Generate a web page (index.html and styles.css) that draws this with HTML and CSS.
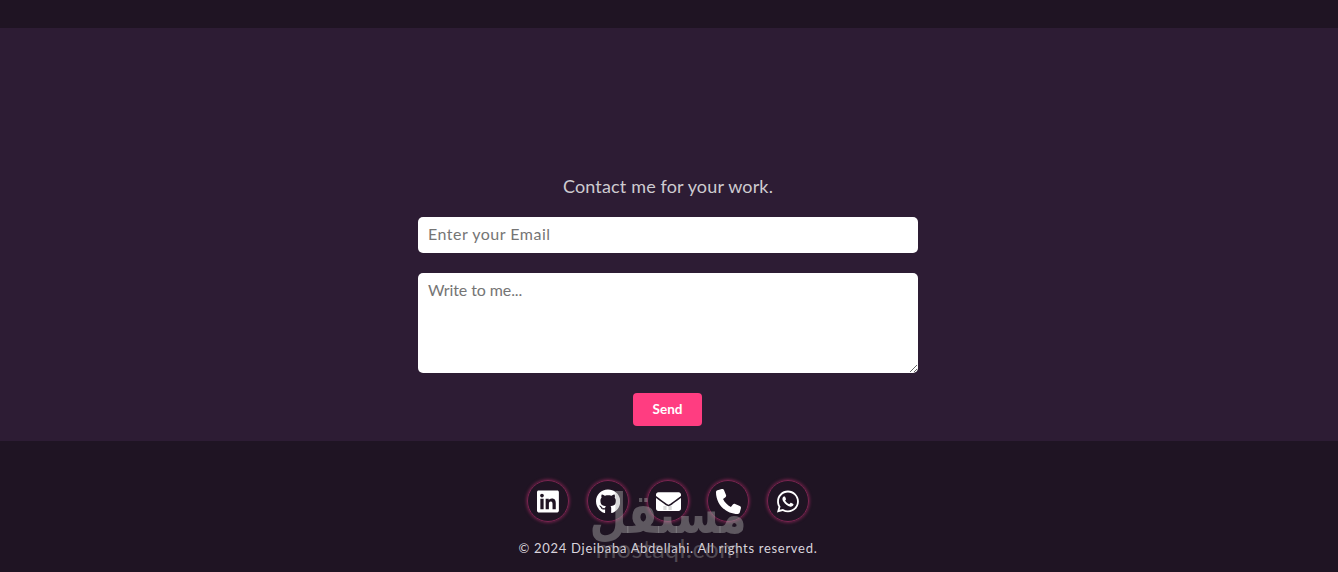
FILE: index.html
```html
<!DOCTYPE html>
<html lang="en">

<head>
  <meta charset="UTF-8">
  <meta name="viewport" content="width=device-width, initial-scale=1.0">
  <title>Contact</title>
  <link rel="stylesheet" href="styles.css">
</head>

<body>

  <!-- Top bar -->
  <header class="top-bar"></header>

  <!-- Contact form -->
  <section class="contact">
    <h2 class="contact-title">Contact me for your work.</h2>
    <form class="contact-form" onsubmit="return false;">
      <input type="email" class="field" placeholder="Enter your Email">
      <textarea class="field field-area" placeholder="Write to me..."></textarea>
      <button type="submit" class="send-btn">Send</button>
    </form>
  </section>

  <!-- Footer -->
  <footer class="footer">
    <div class="socials">
      <a href="#" class="social" aria-label="LinkedIn">
        <svg class="icon" viewBox="0 0 448 512"><path d="M416 32H31.9C14.3 32 0 46.5 0 64.3v383.4C0 465.5 14.3 480 31.9 480H416c17.6 0 32-14.5 32-32.3V64.3c0-17.8-14.4-32.3-32-32.3zM135.4 416H69V202.2h66.5V416zm-33.2-243c-21.3 0-38.5-17.3-38.5-38.5S80.9 96 102.2 96c21.2 0 38.5 17.3 38.5 38.5 0 21.3-17.2 38.5-38.5 38.5zm282.1 243h-66.4V312c0-24.8-.5-56.7-34.5-56.7-34.6 0-39.9 27-39.9 54.9V416h-66.4V202.2h63.7v29.2h.9c8.9-16.8 30.6-34.5 62.9-34.5 67.2 0 79.7 44.3 79.7 101.9V416z"/></svg>
      </a>
      <a href="#" class="social" aria-label="GitHub">
        <svg class="icon" viewBox="0 0 496 512"><path d="M165.9 397.4c0 2-2.3 3.6-5.2 3.6-3.3 0-5.6-1.6-5.6-3.6 0-2 2.3-3.6 5.2-3.6 3-.3 5.6 1.3 5.6 3.6zm-31.1-4.5c-.7 2 1.3 4.3 4.3 4.9 2.6 1 5.6 0 6.2-2s-1.3-4.3-4.3-5.2c-2.6-.7-5.5.3-6.2 2.3zm44.2-1.7c-2.9.7-4.9 2.6-4.6 4.9.3 2 2.9 3.3 5.9 2.6 2.9-.7 4.9-2.6 4.6-4.6-.3-1.9-3-3.2-5.9-2.9zM244.8 8C106.1 8 0 113.3 0 252c0 110.9 69.8 205.8 169.5 239.2 12.8 2.3 17.3-5.6 17.3-12.1 0-6.2-.3-40.4-.3-61.4 0 0-70 15-84.7-29.8 0 0-11.4-29.1-27.8-36.6 0 0-22.9-15.7 1.6-15.4 0 0 24.9 2 38.6 25.8 21.9 38.6 58.6 27.5 72.9 20.9 2.3-16 8.8-27.1 16-33.7-55.9-6.2-112.3-14.3-112.3-110.5 0-27.5 7.6-41.3 23.6-58.9-2.6-6.5-11.1-33.3 2.6-67.9 20.9-6.5 69 27 69 27 20-5.6 41.5-8.5 62.8-8.5s42.8 2.9 62.8 8.5c0 0 48.1-33.6 69-27 13.7 34.7 5.2 61.4 2.6 67.9 16 17.7 25.8 31.5 25.8 58.9 0 96.5-58.9 104.2-114.8 110.5 9.2 7.9 17 22.9 17 46.4 0 33.7-.3 75.4-.3 83.6 0 6.5 4.6 14.4 17.3 12.1C428.2 457.8 496 362.9 496 252 496 113.3 383.5 8 244.8 8z"/></svg>
      </a>
      <a href="#" class="social" aria-label="Email">
        <svg class="icon" viewBox="0 0 512 512"><path d="M502.3 190.8c3.9-3.1 9.7-.2 9.7 4.7V400c0 26.5-21.5 48-48 48H48c-26.5 0-48-21.5-48-48V195.6c0-5 5.7-7.8 9.7-4.7 22.4 17.4 52.1 39.5 154.1 113.6 21.1 15.4 56.7 47.8 92.2 47.6 35.7.3 72-32.8 92.3-47.6 102-74.1 131.6-96.3 154-113.7zM256 320c23.2.4 56.6-29.2 73.4-41.4 132.7-96.3 142.8-104.7 173.4-128.7 5.8-4.5 9.2-11.5 9.2-18.9v-19c0-26.5-21.5-48-48-48H48C21.5 64 0 85.5 0 112v19c0 7.4 3.4 14.3 9.2 18.9 30.6 23.9 40.7 32.4 173.4 128.7 16.8 12.2 50.2 41.8 73.4 41.4z"/></svg>
      </a>
      <a href="#" class="social" aria-label="Phone">
        <svg class="icon" viewBox="0 0 512 512"><path d="M164.9 24.6c-7.7-18.6-28-28.5-47.4-23.2l-88 24C12.1 30.2 0 46 0 64C0 311.4 200.6 512 448 512c18 0 33.8-12.1 38.6-29.5l24-88c5.3-19.4-4.6-39.7-23.2-47.4l-96-40c-16.3-6.8-35.2-2.1-46.3 11.6L304.7 368C234.3 334.7 177.3 277.7 144 207.3L193.3 167c13.7-11.2 18.4-30 11.6-46.3l-40-96z"/></svg>
      </a>
      <a href="#" class="social" aria-label="WhatsApp">
        <svg class="icon" viewBox="0 0 448 512"><path d="M380.9 97.1C339 55.1 283.2 32 223.9 32c-122.4 0-222 99.6-222 222 0 39.1 10.2 77.3 29.6 111L0 480l117.7-30.9c32.4 17.7 68.9 27 106.1 27h.1c122.3 0 224.1-99.6 224.1-222 0-59.3-25.2-115-67.1-157zm-157 341.6c-33.2 0-65.7-8.9-94-25.7l-6.7-4-69.8 18.3L72 359.2l-4.4-7c-18.5-29.4-28.2-63.3-28.2-98.2 0-101.7 82.8-184.5 184.6-184.5 49.3 0 95.6 19.2 130.4 54.1 34.8 34.9 56.2 81.2 56.1 130.5 0 101.8-84.9 184.6-186.6 184.6zm101.2-138.2c-5.5-2.8-32.8-16.2-37.9-18-5.1-1.9-8.8-2.8-12.5 2.8-3.7 5.6-14.3 18-17.6 21.8-3.2 3.7-6.5 4.2-12 1.4-32.6-16.3-54-29.1-75.5-66-5.7-9.8 5.7-9.1 16.3-30.3 1.8-3.7.9-6.9-.5-9.7-1.4-2.8-12.5-30.1-17.1-41.2-4.5-10.8-9.1-9.3-12.5-9.5-3.2-.2-6.9-.2-10.6-.2-3.7 0-9.7 1.4-14.8 6.9-5.1 5.6-19.4 19-19.4 46.3 0 27.3 19.9 53.7 22.6 57.4 2.8 3.7 39.1 59.7 94.8 83.8 35.2 15.2 49 16.5 66.6 13.9 10.7-1.6 32.8-13.4 37.4-26.4 4.6-13 4.6-24.1 3.2-26.4-1.3-2.5-5-3.9-10.5-6.6z"/></svg>
      </a>
    </div>
    <p class="copyright">© 2024 Djeibaba Abdellahi. All rights reserved.</p>

    <!-- Watermark over the footer -->
    <div class="watermark">
      <span class="watermark-ar" lang="ar" dir="rtl">مستقل</span>
      <span class="watermark-en">mostaql.com</span>
    </div>
  </footer>

</body>

</html>
```

FILE: styles.css
```css
body {
  font-family: Lato, "Open Sans", sans-serif;
  margin: 0;
  background: #2d1c34;
}

.top-bar {
  height: 28px;
  background: #1f1423;
}

.contact {
  height: 413px;
  box-sizing: border-box;
  padding: 148px 2px 0 0;
  background: #2d1c34;
}

.contact-title {
  margin: 0 0 20px;
  height: 21px;
  line-height: 20px;
  text-align: center;
  font-size: 18px;
  font-weight: 400;
  letter-spacing: 0.15px;
  color: #cdcbd0;
}

.contact-form {
  width: 500px;
  margin: 0 auto;
  display: flex;
  flex-direction: column;
  align-items: center;
  gap: 20px;
}

.field {
  width: 100%;
  height: 36px;
  box-sizing: border-box;
  padding: 0 10px 3px;
  border: none;
  border-radius: 5px;
  background: white;
  font-family: inherit;
  font-size: 16px;
  letter-spacing: 0.5px;
  display: block;
}

.field-area {
  height: 100px;
  padding: 7px 10px;
  letter-spacing: -0.1px;
}

.send-btn {
  width: 69px;
  height: 33px;
  margin-right: 1px;
  padding: 0 0 2px;
  border: none;
  border-radius: 4px;
  background: #ff3d81;
  color: white;
  font-family: inherit;
  font-size: 13.5px;
  font-weight: 700;
}

.footer {
  position: relative;
  height: 131px;
  box-sizing: border-box;
  padding: 39px 2px 0 0;
  background: #1f1423;
  text-align: center;
}

.socials {
  display: flex;
  justify-content: center;
  gap: 18px;
}

.social {
  width: 42px;
  height: 42px;
  box-sizing: border-box;
  border: 1px solid #7a2450;
  border-radius: 50%;
  box-shadow: 0 0 3px 1px #6b2147;
  display: flex;
  align-items: center;
  justify-content: center;
}

.icon {
  height: 25px;
  fill: white;
}

.copyright {
  margin: 17px 0 0;
  font-size: 13px;
  line-height: 18px;
  letter-spacing: 0.7px;
  color: #d9d3dc;
}

.watermark {
  position: absolute;
  left: 593px;
  top: 50px;
  width: 150px;
  display: flex;
  flex-direction: column;
  align-items: center;
  color: rgba(170, 170, 170, 0.45);
  pointer-events: none;
}

.watermark-ar {
  font-family: "DejaVu Sans", sans-serif;
  font-weight: 700;
  font-size: 43px;
  line-height: 47px;
  transform: scaleY(1.3);
}

.watermark-en {
  font-size: 25px;
  line-height: 20px;
  letter-spacing: 0.5px;
  opacity: 0.8;
}
```
